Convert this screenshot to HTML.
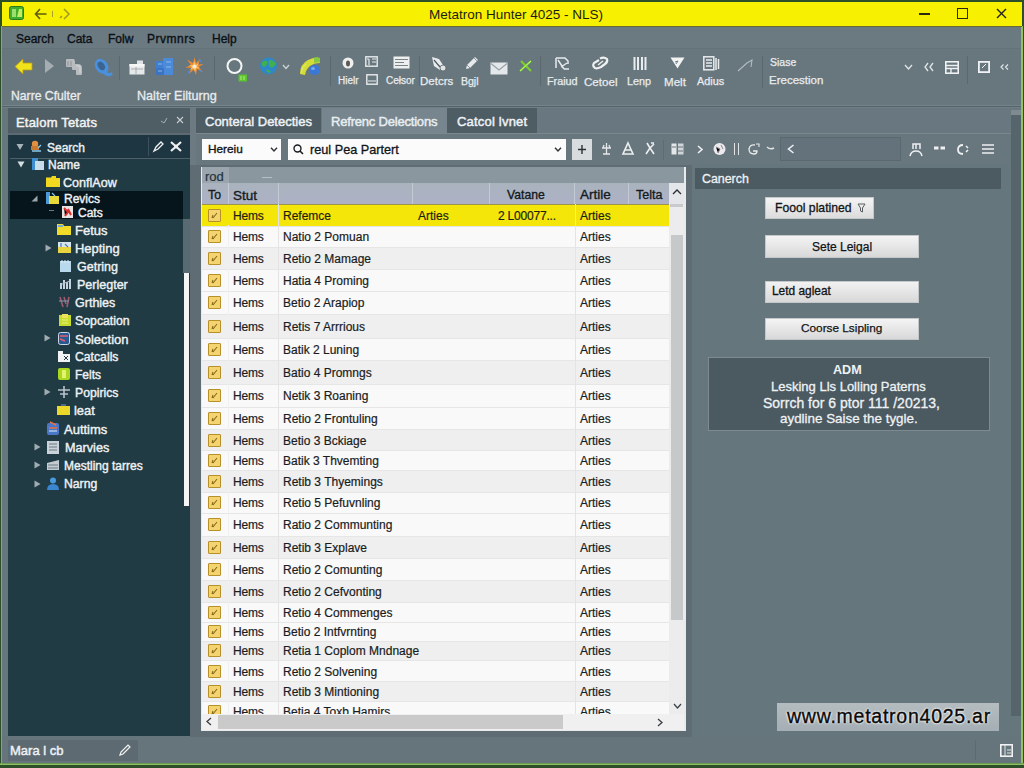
<!DOCTYPE html>
<html><head><meta charset="utf-8">
<style>
*{margin:0;padding:0;box-sizing:border-box}
html,body{width:1024px;height:768px;overflow:hidden;background:#66767d;font-family:"Liberation Sans",sans-serif;font-size:12px;color:#111}
.a{position:absolute}
.t{position:absolute;white-space:nowrap;line-height:1}
svg{position:absolute;overflow:visible}
.tb{font-size:11px;color:#e8ecee;-webkit-text-stroke:0.25px #e8ecee}
.m{-webkit-text-stroke:0.3px currentColor}
.m2{-webkit-text-stroke:0.2px currentColor}
.mn{font-size:12px;color:#0a1014;top:33px;-webkit-text-stroke:0.35px #0a1014}
.gr{font-size:12px;color:#161a1c;-webkit-text-stroke:0.2px currentColor}
.tr{font-size:12.5px;color:#eef2f4;-webkit-text-stroke:0.4px #eef2f4}
</style></head><body>
<!-- outer frame -->
<div class="a" style="left:0;top:0;width:1024px;height:768px;background:#2c4f2a"></div>
<div class="a" style="left:2px;top:2px;width:1020px;height:762px;background:#66767d"></div>
<div class="a" style="left:1021px;top:26px;width:2px;height:739px;background:#8fc45e"></div>
<div class="a" style="left:0;top:763px;width:1024px;height:1px;background:#6c9a50"></div><div class="a" style="left:0;top:764px;width:1024px;height:1px;background:#8cc060"></div>
<div class="a" style="left:1px;top:26px;width:1px;height:738px;background:#7fb058"></div>

<!-- title bar -->
<div class="a" style="left:2px;top:2px;width:1020px;height:25px;background:#f7f000"></div>
<div class="a" style="left:2px;top:26px;width:1020px;height:1px;background:#6a6a30"></div>
<svg style="left:8px;top:5px" width="18" height="17" viewBox="0 0 18 17">
 <rect x="1.5" y="1.5" width="14" height="13" rx="2" fill="#3fae2c" stroke="#2a7a20" stroke-width="1"/>
 <rect x="4" y="4" width="4" height="8" fill="#9ee070"/>
 <path d="M9 12 L11 4 L14 4 L14 12 Z" fill="#c8ec60"/>
</svg>
<svg style="left:34px;top:8px" width="14" height="12" viewBox="0 0 14 12">
 <path d="M6 1 L1.5 6 L6 11 M1.5 6 H12.5" fill="none" stroke="#5e5c10" stroke-width="1.6"/>
</svg>
<div class="a" style="left:52px;top:11px;width:1px;height:6px;background:#a8a030"></div>
<svg style="left:58px;top:8px" width="12" height="12" viewBox="0 0 12 12">
 <path d="M6 1 L11 6 L6 11 M4 8 L2 10" fill="none" stroke="#a09a20" stroke-width="1.5"/>
</svg>
<div class="t" style="left:429px;top:8px;font-size:13.5px;color:#1c1c10">Metatron Hunter 4025 - NLS)</div>
<div class="a" style="left:919px;top:13px;width:11px;height:2px;background:#2a2a10"></div>
<div class="a" style="left:957px;top:8px;width:11px;height:11px;border:1.6px solid #2a2a10"></div>
<svg style="left:996px;top:8px" width="11" height="11" viewBox="0 0 11 11">
 <path d="M1 1 L10 10 M10 1 L1 10" stroke="#222210" stroke-width="1.4"/>
</svg>

<!-- menu bar -->
<div class="a" style="left:2px;top:27px;width:1019px;height:21px;background:#6b7981"></div>
<div class="a" style="left:2px;top:48px;width:1019px;height:1px;background:#64737a"></div>
<div class="t mn" style="left:16px">Search</div>
<div class="t mn" style="left:67px">Cata</div>
<div class="t mn" style="left:108px">Folw</div>
<div class="t mn" style="left:147px;letter-spacing:0.5px">Prvmnrs</div>
<div class="t mn" style="left:212px">Help</div>

<!-- toolbar -->
<div class="a" style="left:2px;top:49px;width:1019px;height:57px;background:#68777e"></div>
<div class="a" style="left:2px;top:105px;width:1019px;height:1px;background:#74838a"></div><div class="a" style="left:2px;top:106px;width:1019px;height:1px;background:#55636b"></div><div class="a" style="left:2px;top:107px;width:1019px;height:1px;background:#6f7d85"></div>
<!-- toolbar icons -->
<svg style="left:14px;top:58px" width="19" height="17" viewBox="0 0 19 17">
 <path d="M1 8.5 L9 1 L9 5 L18 5 L18 12 L9 12 L9 16 Z" fill="#f2e21c" stroke="#b8a010" stroke-width="0.8"/>
</svg>
<svg style="left:44px;top:58px" width="11" height="16" viewBox="0 0 11 16">
 <path d="M1 1 L10 8 L1 15 Z" fill="#a4adb1"/>
</svg>
<svg style="left:65px;top:58px" width="19" height="18" viewBox="0 0 19 18">
 <path d="M1 2 Q1 1 2 1 H9 L10 3 V6 H13 Q17 6 17 10 V16 Q17 17 16 17 H12 Q11 17 11 16 V12 H8 Q7 12 7 11 V9 H2 Q1 9 1 8 Z" fill="#b8bcbf"/>
 <path d="M3 3 V8 M6 3 V8" stroke="#8e9498" stroke-width="1"/>
 <path d="M11 8 H15 V15" fill="none" stroke="#d4d8da" stroke-width="1"/>
</svg>
<svg style="left:93px;top:57px" width="19" height="20" viewBox="0 0 19 20">
 <g transform="rotate(-35 9 9)"><ellipse cx="8.5" cy="9" rx="6.2" ry="8" fill="#4a90dc"/><ellipse cx="8.5" cy="8.5" rx="3.2" ry="4.6" fill="#3c6490"/></g>
 <path d="M11 15 Q15 19 18 17" fill="none" stroke="#4a90dc" stroke-width="3.2" stroke-linecap="round"/>
</svg>
<div class="a" style="left:119px;top:56px;width:1px;height:24px;background:#5c686f"></div>
<svg style="left:129px;top:60px" width="16" height="15" viewBox="0 0 16 15">
 <rect x="0.5" y="4" width="15" height="10.5" fill="#e6e9ea"/>
 <rect x="0.5" y="4" width="15" height="2.5" fill="#f6f6f6"/>
 <path d="M2 9 H14 M7 7 V14" stroke="#9aa0a4" stroke-width="0.8"/>
 <rect x="8" y="0.5" width="6" height="3.5" fill="#dfe3e5"/>
</svg>
<svg style="left:155px;top:57px" width="19" height="19" viewBox="0 0 19 19">
 <rect x="1" y="4" width="8" height="7" fill="#3f7fd0"/>
 <rect x="8" y="1" width="10" height="17" fill="#4a8ad8"/>
 <rect x="1" y="11" width="8" height="7" fill="#3a74c2"/>
 <path d="M3 7 H7 M3 14 H7 M11 5 H16 M11 10 H16" stroke="#8cb6ea" stroke-width="1"/>
</svg>
<svg style="left:185px;top:57px" width="19" height="19" viewBox="0 0 19 19">
 <path d="M9.5 0.5 L11 6 L15.5 1.5 L13 7.5 L18.5 7 L13.5 10 L18 15 L12 12 L11 18 L9 12.5 L4 17 L6.5 11 L0.5 10.5 L6 8 L2 2.5 L8 6 Z" fill="#f08a30"/>
 <path d="M9.5 4 L10.5 8 L14 6 L12 9.5 L15 11 L11 11.5 L10 15 L8.5 11.5 L5 13 L7 10 L4 8 L8 8 Z" fill="#f8c060"/>
 <circle cx="9.5" cy="9.5" r="2" fill="#f0e8d8"/>
 <circle cx="15" cy="4" r="1.3" fill="#4a8ad8"/><circle cx="4" cy="15" r="1.3" fill="#4a8ad8"/><circle cx="16" cy="14" r="1" fill="#4a8ad8"/>
</svg>
<div class="a" style="left:214px;top:56px;width:1px;height:24px;background:#5c686f"></div>
<svg style="left:226px;top:58px" width="22" height="24" viewBox="0 0 22 24">
 <circle cx="8.5" cy="8" r="7" fill="none" stroke="#f4f6f6" stroke-width="2"/>
 <rect x="12.5" y="16.5" width="8.5" height="7" fill="#5cc430"/>
 <path d="M15 18 V22 M18 18 V22" stroke="#b8f080" stroke-width="1"/>
</svg>
<svg style="left:259px;top:57px" width="19" height="18" viewBox="0 0 19 18">
 <circle cx="9.5" cy="9" r="8.5" fill="#2e88c8"/>
 <path d="M3 5 Q7 2 9 5 Q8 9 5 10 Q2 9 3 5 Z M10 3 Q15 3 17 7 Q14 12 11 10 Q9 7 10 3 Z M7 13 Q10 12 12 15 Q9 17 7 13Z" fill="#3fb050"/>
</svg>
<svg style="left:282px;top:64px" width="8" height="6" viewBox="0 0 8 6">
 <path d="M1 1 L4 4.5 L7 1" fill="none" stroke="#d0d6d8" stroke-width="1.2"/>
</svg>
<svg style="left:299px;top:56px" width="22" height="21" viewBox="0 0 22 21">
 <path d="M1 18 Q1 8 9 4 Q15 1 21 2 L21 7 Q15 7 11 10 Q7 13 6 19 Z" fill="#d4dc38"/>
 <path d="M15 1.5 Q19 1 21 2 L21 6.5 Q18 6 15 7 Z" fill="#88c840"/>
 <path d="M2 17 Q3 11 7 8" fill="none" stroke="#e8ec70" stroke-width="1"/>
 <ellipse cx="15.5" cy="14" rx="5.5" ry="5" fill="#3a78d8"/>
 <ellipse cx="14" cy="12.5" rx="2" ry="1.5" fill="#7aa8f0"/>
</svg>
<div class="a" style="left:330px;top:56px;width:1px;height:30px;background:#5c686f"></div>
<svg style="left:342px;top:57px" width="12" height="12" viewBox="0 0 12 12">
 <circle cx="6" cy="6" r="5.5" fill="#eef0f0"/>
 <ellipse cx="6" cy="6.5" rx="2" ry="3" fill="#605850"/>
</svg>
<svg style="left:365px;top:56px" width="13" height="11" viewBox="0 0 13 11">
 <rect x="0.8" y="0.8" width="11.4" height="9.4" fill="none" stroke="#e8ecee" stroke-width="1.4"/>
 <path d="M4 3 V9 M7 3 H11 M7 6 H11 M2 3 H4" stroke="#e8ecee" stroke-width="1.2"/>
</svg>
<svg style="left:366px;top:74px" width="14" height="11" viewBox="0 0 14 11">
 <rect x="0.8" y="0.8" width="10.4" height="9.4" fill="none" stroke="#e8ecee" stroke-width="1.4"/>
 <path d="M2 7 H10" stroke="#e8ecee" stroke-width="1"/>
</svg>
<svg style="left:393px;top:56px" width="17" height="13" viewBox="0 0 17 13">
 <rect x="0.5" y="0.5" width="16" height="12" fill="#eef0f0"/>
 <path d="M2 3.5 H15 M2 6.5 H11 M2 9.5 H15" stroke="#788288" stroke-width="1.2"/>
</svg>
<div class="a" style="left:419px;top:56px;width:1px;height:30px;background:#5c686f"></div>
<svg style="left:430px;top:56px" width="17" height="16" viewBox="0 0 17 16">
 <path d="M2 1 L9 3 L13 9 L10 14 L4 10 Z" fill="#e8ecee"/>
 <path d="M4 4 L10 11" stroke="#4c565c" stroke-width="1.2"/>
 <circle cx="13" cy="12" r="3" fill="#dfe3e5" stroke="#5a646a" stroke-width="0.8"/>
</svg>
<svg style="left:464px;top:56px" width="15" height="15" viewBox="0 0 15 15">
 <path d="M2 13 L3 9 L11 1 L14 4 L6 12 Z" fill="#e6eaec"/>
 <path d="M3 9 L6 12 M10 2 L13 5" stroke="#8c969a" stroke-width="1"/>
</svg>
<svg style="left:490px;top:62px" width="18" height="13" viewBox="0 0 18 13">
 <rect x="0.5" y="0.5" width="17" height="12" fill="#e4e8ea"/>
 <path d="M1 1.5 L9 8 L17 1.5" fill="none" stroke="#98a2a6" stroke-width="1.2"/>
</svg>
<svg style="left:519px;top:59px" width="14" height="14" viewBox="0 0 14 14">
 <path d="M1 12 L12 2 M2 2 L12 12" stroke="#7ed030" stroke-width="2"/>
 <path d="M1 12 L12 2" stroke="#b8ff70" stroke-width="1"/>
</svg>
<div class="a" style="left:540px;top:56px;width:1px;height:30px;background:#5c686f"></div>
<svg style="left:555px;top:56px" width="15" height="15" viewBox="0 0 15 15">
 <path d="M1 2 H10 L13 5 V8 M1 2 V12 M3 4 L9 13 M12 7 L6 11 M9 13 L14 13" fill="none" stroke="#e6eaec" stroke-width="1.5"/>
</svg>
<svg style="left:592px;top:57px" width="17" height="13" viewBox="0 0 17 13">
 <path d="M3 11 Q0 9 2 6 L7 3 M8 1.5 Q12 -0.5 15 2 Q16 5 13 7 L9 10 Q5 12 3 11" fill="none" stroke="#eef0f2" stroke-width="2.2"/>
 <path d="M6 8 L11 4" stroke="#eef0f2" stroke-width="1.4"/>
</svg>
<svg style="left:633px;top:56px" width="14" height="15" viewBox="0 0 14 15">
 <path d="M1.5 1 V14 M5 1 V14 M9 1 V14 M12.5 1 V14" stroke="#e8ecee" stroke-width="2"/>
</svg>
<svg style="left:670px;top:57px" width="15" height="12" viewBox="0 0 15 12">
 <path d="M0.5 0.5 H14.5 L7.5 11.5 Z" fill="#f2f4f4"/>
 <path d="M5 5 L8 4 L6 7" fill="none" stroke="#707a80" stroke-width="1"/>
</svg>
<svg style="left:703px;top:56px" width="17" height="15" viewBox="0 0 17 15">
 <rect x="0.8" y="0.8" width="10" height="13" fill="none" stroke="#e8ecee" stroke-width="1.5"/>
 <path d="M3 4 H9 M3 7 H9 M3 10 H9" stroke="#e8ecee" stroke-width="1.4"/>
 <path d="M13 2 V14 M15.5 3 V13" stroke="#e8ecee" stroke-width="1.5"/>
</svg>
<svg style="left:737px;top:59px" width="16" height="13" viewBox="0 0 16 13">
 <path d="M1 12 L10 4 L15 1 L14 8" fill="none" stroke="#b4bcc0" stroke-width="1.1"/>
</svg>
<div class="a" style="left:762px;top:56px;width:1px;height:32px;background:#5c686f"></div>
<svg style="left:904px;top:64px" width="9" height="6" viewBox="0 0 9 6">
 <path d="M1 1 L4.5 5 L8 1" fill="none" stroke="#e0e6e8" stroke-width="1.3"/>
</svg>
<svg style="left:924px;top:62px" width="10" height="10" viewBox="0 0 10 10">
 <path d="M4 1 L1 5 L4 9 M9 1 L6 5 L9 9" fill="none" stroke="#e0e6e8" stroke-width="1.3"/>
</svg>
<svg style="left:945px;top:61px" width="14" height="13" viewBox="0 0 14 13">
 <rect x="0.8" y="0.8" width="12.4" height="11.4" fill="none" stroke="#eef0f2" stroke-width="1.6"/>
 <path d="M1 4.5 H13 M1 7.5 H13 M6 7.5 V12" stroke="#eef0f2" stroke-width="1.4"/>
</svg>
<div class="a" style="left:967px;top:56px;width:1px;height:28px;background:#5c686f"></div>
<svg style="left:978px;top:61px" width="12" height="12" viewBox="0 0 12 12">
 <rect x="0.9" y="0.9" width="10.2" height="10.2" fill="none" stroke="#f0f2f4" stroke-width="1.8"/>
 <path d="M4 7 L8 3" stroke="#f0f2f4" stroke-width="1"/>
</svg>
<svg style="left:1000px;top:64px" width="9" height="6" viewBox="0 0 9 6">
 <path d="M3.5 0.5 L1 3 L3.5 5.5 M8 0.5 L5.5 3 L8 5.5" fill="none" stroke="#e0e6e8" stroke-width="1.2"/>
</svg>

<!-- toolbar labels -->
<div class="t tb" style="left:338px;top:76px;font-size:10px">Hielr</div>
<div class="t tb" style="left:386px;top:76px;font-size:10px">Cełsor</div>
<div class="t tb" style="left:420px;top:76px;font-size:11.5px">Detcrs</div>
<div class="t tb" style="left:461px;top:76px;font-size:10.5px">Bgjl</div>
<div class="t tb" style="left:547px;top:76px;font-size:10.8px">Fraiud</div>
<div class="t tb" style="left:584px;top:76px;font-size:11.6px">Cetoel</div>
<div class="t tb" style="left:627px;top:76px;font-size:10.8px">Lenp</div>
<div class="t tb" style="left:664px;top:76px;font-size:11.6px">Melt</div>
<div class="t tb" style="left:697px;top:76px;font-size:10.9px">Adius</div>
<div class="t tb" style="left:770px;top:57px;font-size:10.5px">Siase</div>
<div class="t tb" style="left:769px;top:75px;font-size:11.5px">Erecestion</div>
<div class="t" style="left:11px;top:90px;font-size:12.2px;color:#e8ecee;-webkit-text-stroke:0.3px #e8ecee">Narre Cfulter</div>
<div class="t" style="left:137px;top:90px;font-size:12.6px;color:#e8ecee;-webkit-text-stroke:0.3px #e8ecee">Nalter Eilturng</div>
<!-- left panel -->
<div class="a" style="left:8px;top:108px;width:182px;height:25px;background:#4f5d65"></div>
<div class="a" style="left:8px;top:133px;width:182px;height:2px;background:#5d6a72"></div>
<div class="t" style="left:16px;top:116px;font-size:13px;color:#f2f4f4;letter-spacing:0.2px;-webkit-text-stroke:0.45px #f2f4f4">Etalom Tetats</div>
<svg style="left:160px;top:117px" width="8" height="7" viewBox="0 0 8 7"><path d="M1 4 L4 6 L7 1" fill="none" stroke="#a8b0b4" stroke-width="1"/></svg>
<svg style="left:176px;top:116px" width="8" height="8" viewBox="0 0 8 8"><path d="M1 1 L7 7 M7 1 L1 7" stroke="#c8ced0" stroke-width="1.1"/></svg>
<div class="a" style="left:8px;top:135px;width:182px;height:601px;background:#203b44"></div>
<div class="a" style="left:10px;top:135px;width:180px;height:23px;background:#1d3641"></div>
<div class="a" style="left:10px;top:158px;width:180px;height:1px;background:#4e606a"></div>
<div class="a" style="left:148px;top:137px;width:1px;height:19px;background:#3e525c"></div>
<div class="a" style="left:10px;top:191px;width:173px;height:28px;background:#06141b"></div>
<!-- scrollbar -->
<div class="a" style="left:183px;top:219px;width:7px;height:54px;background:#5a6a72"></div>
<div class="a" style="left:184px;top:273px;width:5px;height:233px;background:#f4f6f6"></div>
<div class="a" style="left:190px;top:108px;width:6px;height:629px;background:#6d7a82"></div>

<!-- tree items -->
<svg style="left:16px;top:143px" width="8" height="8" viewBox="0 0 8 8"><path d="M0.5 1 H7.5 L4 7 Z" fill="#a8b4ba"/></svg>
<svg style="left:30px;top:140px" width="12" height="13" viewBox="0 0 12 13">
 <circle cx="5" cy="4" r="3.2" fill="#e09040"/><rect x="1" y="6" width="8" height="4" fill="#c87a30"/>
 <path d="M2 11 H11 M8 8 L11 5" stroke="#8ac8e8" stroke-width="1.3"/>
</svg>
<div class="t tr" style="left:47px;top:142px;font-weight:normal;font-size:12px;color:#e8eef0">Search</div>
<svg style="left:153px;top:141px" width="11" height="11" viewBox="0 0 11 11"><path d="M1 10 L3 6 L8 1 L10 3 L5 8 Z" fill="none" stroke="#f0f2f2" stroke-width="1.3"/></svg>
<svg style="left:170px;top:141px" width="12" height="11" viewBox="0 0 12 11"><path d="M1 1 L11 10 M11 1 L1 10" stroke="#eef0f0" stroke-width="2.2"/><circle cx="6" cy="5.5" r="2" fill="#eef0f0"/></svg>

<svg style="left:17px;top:161px" width="8" height="7" viewBox="0 0 8 7"><path d="M0.5 0.5 H7.5 L4 6.5 Z" fill="#d4dde2"/></svg>
<svg style="left:32px;top:158px" width="12" height="12" viewBox="0 0 12 12"><rect x="0" y="0" width="6" height="12" fill="#3c8ed0"/><rect x="3" y="3" width="9" height="9" fill="#c8dcea"/></svg>
<div class="t tr" style="left:48px;top:159px;font-size:12.00px">Name</div>

<svg style="left:46px;top:176px" width="14" height="11" viewBox="0 0 14 11"><path d="M0 1.5 H5 L6 0 H10 V2 H14 V11 H0 Z" fill="#f2d820"/></svg>
<div class="t tr" style="left:63px;top:177px;font-size:12.57px">ConflAow</div>

<svg style="left:31px;top:195px" width="7" height="7" viewBox="0 0 7 7"><path d="M6.5 0.5 V6.5 H0.5 Z" fill="#9aa6ac"/></svg>
<svg style="left:46px;top:192px" width="13" height="12" viewBox="0 0 13 12"><rect x="0" y="0" width="4" height="12" fill="#4a9ad8"/><path d="M3 4 H13 V12 H3 Z" fill="#e8d838"/><path d="M6 1 L9 4" stroke="#88c0e8" stroke-width="1.2"/></svg>
<div class="t tr" style="left:64px;top:193px;font-size:12.00px">Revics</div>

<div class="a" style="left:49px;top:210px;width:5px;height:1px;background:#6a7a82"></div>
<svg style="left:62px;top:206px" width="11" height="12" viewBox="0 0 11 12"><rect x="0" y="0" width="11" height="12" fill="#e8e2e2"/><path d="M2 2 L6 6 L3 10 M6 3 L9 9" stroke="#d83030" stroke-width="2"/></svg>
<div class="t tr" style="left:78px;top:207px;font-size:12.00px">Cats</div>

<svg style="left:57px;top:224px" width="14" height="11" viewBox="0 0 14 11"><path d="M0 0 H6 L7 2 H14 V11 H0 Z" fill="#f0dc28"/><rect x="1" y="1" width="5" height="2" fill="#7aaad0"/></svg>
<div class="t tr" style="left:75px;top:224px;font-size:12.99px">Fetus</div>

<svg style="left:45px;top:244px" width="7" height="8" viewBox="0 0 7 8"><path d="M0.5 0.5 L6.5 4 L0.5 7.5 Z" fill="#a0acb2"/></svg>
<svg style="left:58px;top:242px" width="13" height="11" viewBox="0 0 13 11"><rect x="0" y="0" width="13" height="11" fill="#d6e4ee"/><path d="M0 5 H13 V11 H0Z" fill="#e6d440"/><path d="M3 1 V5 M7 2 L10 5" stroke="#4a7ab0" stroke-width="1.2"/></svg>
<div class="t tr" style="left:75px;top:243px;font-size:12.96px">Hepting</div>

<svg style="left:60px;top:260px" width="11" height="12" viewBox="0 0 11 12"><rect x="0" y="1" width="11" height="11" fill="#b8d8ec"/><path d="M2 0 V3 M5 0 V3 M8 0 V3" stroke="#e0eef6" stroke-width="1"/></svg>
<div class="t tr" style="left:77px;top:261px;font-size:12.50px">Getring</div>

<svg style="left:60px;top:278px" width="11" height="12" viewBox="0 0 11 12"><path d="M1 11 V5 M4 11 V2 M7 11 V4 M10 11 V1" stroke="#d8e6ee" stroke-width="1.8"/><path d="M0 7 L10 3" stroke="#b0c4d0" stroke-width="1"/></svg>
<div class="t tr" style="left:77px;top:279px;font-size:12.52px">Perlegter</div>

<svg style="left:59px;top:296px" width="11" height="12" viewBox="0 0 11 12"><path d="M1 1 L4 11 M5 1 L7 8 M10 1 L8 11" stroke="#a05a70" stroke-width="1.6"/><path d="M0 5 H10" stroke="#8898b0" stroke-width="1"/></svg>
<div class="t tr" style="left:75px;top:297px;font-size:12.53px">Grthies</div>

<svg style="left:59px;top:314px" width="12" height="12" viewBox="0 0 12 12"><rect x="0" y="1" width="12" height="11" fill="#c8dc30"/><rect x="3" y="0" width="6" height="4" fill="#f0e060"/><path d="M3 6 H9 M3 9 H9" stroke="#e8f080" stroke-width="1"/></svg>
<div class="t tr" style="left:75px;top:315px;font-size:12.30px">Sopcation</div>

<svg style="left:44px;top:334px" width="7" height="8" viewBox="0 0 7 8"><path d="M0.5 0.5 L6.5 4 L0.5 7.5 Z" fill="#a0acb2"/></svg>
<svg style="left:58px;top:332px" width="12" height="13" viewBox="0 0 12 13"><rect x="0.5" y="0.5" width="11" height="12" rx="2" fill="#2a5a90" stroke="#c8d8e8" stroke-width="1"/><path d="M2 4 H10 M2 7 L7 9" stroke="#e06070" stroke-width="1.4"/></svg>
<div class="t tr" style="left:75px;top:333px;font-size:13.00px">Solection</div>

<svg style="left:58px;top:351px" width="12" height="11" viewBox="0 0 12 11"><path d="M0 0 H5 V3 H12 V11 H0 Z" fill="#f0f2f4"/><path d="M6 5 L10 9 M10 5 L6 9" stroke="#2a3a44" stroke-width="1"/></svg>
<div class="t tr" style="left:75px;top:351px;font-size:12.23px">Catcalls</div>

<svg style="left:58px;top:368px" width="12" height="12" viewBox="0 0 12 12"><rect x="0" y="0" width="12" height="12" rx="2" fill="#a8d820"/><rect x="4" y="2" width="4" height="8" fill="#e8f070"/></svg>
<div class="t tr" style="left:75px;top:369px;font-size:12.00px">Felts</div>

<svg style="left:44px;top:388px" width="7" height="8" viewBox="0 0 7 8"><path d="M0.5 0.5 L6.5 4 L0.5 7.5 Z" fill="#a0acb2"/></svg>
<svg style="left:58px;top:386px" width="12" height="12" viewBox="0 0 12 12"><path d="M6 0 V12 M0 4 H12 M2 8 H10" stroke="#b8c4ca" stroke-width="1.6"/></svg>
<div class="t tr" style="left:75px;top:387px;font-size:12.23px">Popirics</div>

<svg style="left:57px;top:404px" width="13" height="11" viewBox="0 0 13 11"><path d="M0 2 H4 L5 0 H8 L9 2 H13 V11 H0 Z" fill="#ecd828"/><rect x="4" y="0" width="5" height="2" fill="#4a6a88"/></svg>
<div class="t tr" style="left:74px;top:405px;font-size:12.90px">leat</div>

<svg style="left:47px;top:422px" width="12" height="13" viewBox="0 0 12 13"><rect x="0" y="1" width="12" height="12" rx="2" fill="#4a78c8"/><path d="M3 0 L9 3 M2 6 H10" stroke="#e87040" stroke-width="1.5"/><path d="M2 9 H10" stroke="#c8dcf0" stroke-width="1.2"/></svg>
<div class="t tr" style="left:64px;top:423px;font-size:13.00px">Auttims</div>

<svg style="left:34px;top:443px" width="7" height="8" viewBox="0 0 7 8"><path d="M0.5 0.5 L6.5 4 L0.5 7.5 Z" fill="#a0acb2"/></svg>
<svg style="left:47px;top:441px" width="12" height="13" viewBox="0 0 12 13"><rect x="0" y="0" width="12" height="13" fill="#c8d2d8"/><path d="M2 3 H10 M2 6 H10 M2 9 H10" stroke="#6a7a84" stroke-width="1.2"/></svg>
<div class="t tr" style="left:65px;top:442px;font-size:12.65px">Marvies</div>

<svg style="left:34px;top:461px" width="7" height="8" viewBox="0 0 7 8"><path d="M0.5 0.5 L6.5 4 L0.5 7.5 Z" fill="#a0acb2"/></svg>
<svg style="left:47px;top:460px" width="12" height="10" viewBox="0 0 12 10"><path d="M0 3 L12 0 V10 H0 Z" fill="#c4ccd2"/><path d="M1 5 H11 M1 8 H11" stroke="#6a7a84" stroke-width="1"/></svg>
<div class="t tr" style="left:64px;top:460px;font-size:12.00px">Mestling tarres</div>

<svg style="left:34px;top:480px" width="7" height="8" viewBox="0 0 7 8"><path d="M0.5 0.5 L6.5 4 L0.5 7.5 Z" fill="#a0acb2"/></svg>
<svg style="left:47px;top:477px" width="12" height="13" viewBox="0 0 12 13"><circle cx="6" cy="3.5" r="3" fill="#4a9ae0"/><path d="M0 13 Q0 7 6 7 Q12 7 12 13 Z" fill="#3a86d0"/></svg>
<div class="t tr" style="left:64px;top:478px;font-size:12.19px">Narng</div>

<!-- bottom status -->
<div class="a" style="left:2px;top:737px;width:1019px;height:26px;background:#66757c"></div>
<div class="a" style="left:8px;top:740px;width:130px;height:21px;background:#5d6a72"></div>
<div class="t" style="left:10px;top:744px;font-size:13px;color:#eef2f4;-webkit-text-stroke:0.45px #eef2f4">Mara l cb</div>
<svg style="left:119px;top:744px" width="12" height="12" viewBox="0 0 12 12"><path d="M1 11 L2 8 L9 1 L11 3 L4 10 Z" fill="none" stroke="#f2f4f4" stroke-width="1.2"/></svg>
<!-- center tabs -->
<div class="a" style="left:196px;top:108px;width:825px;height:26px;background:#687780"></div>
<div class="a" style="left:196px;top:108px;width:125px;height:25px;background:#4e5c64"></div>
<div class="a" style="left:322px;top:108px;width:125px;height:25px;background:#76858e"></div>
<div class="a" style="left:447px;top:108px;width:90px;height:25px;background:#4e5c64"></div>
<div class="a" style="left:196px;top:133px;width:815px;height:1px;background:#7a878e"></div>
<div class="t" style="left:205px;top:115px;font-size:13px;color:#eef2f4;letter-spacing:0px;-webkit-text-stroke:0.45px #eef2f4">Conteral Detecties</div>
<div class="t" style="left:331px;top:115px;font-size:13px;color:#e8eef0;letter-spacing:-0.2px;-webkit-text-stroke:0.45px #e8eef0">Refrenc Delections</div>
<div class="t" style="left:457px;top:115px;font-size:13px;color:#eef2f4;letter-spacing:0.2px;-webkit-text-stroke:0.45px #eef2f4">Catcol lvnet</div>

<!-- center toolbar row -->
<div class="a" style="left:196px;top:134px;width:815px;height:31px;background:#68777e"></div>
<div class="a" style="left:202px;top:139px;width:79px;height:21px;background:#fbfbfb"></div>
<div class="t" style="left:208px;top:144px;font-size:11.8px;color:#101418;-webkit-text-stroke:0.35px #101418">Hereiu</div>
<svg style="left:270px;top:147px" width="8" height="5" viewBox="0 0 8 5"><path d="M1 0.8 L4 4 L7 0.8" fill="none" stroke="#303438" stroke-width="1.4"/></svg>
<div class="a" style="left:288px;top:139px;width:278px;height:21px;background:#fbfbfb"></div>
<svg style="left:293px;top:144px" width="11" height="11" viewBox="0 0 11 11"><circle cx="4.5" cy="4.5" r="3.5" fill="none" stroke="#1a1e22" stroke-width="1.4"/><path d="M7 7 L10 10" stroke="#1a1e22" stroke-width="1.6"/></svg>
<div class="t" style="left:310px;top:144px;font-size:12.7px;color:#101418;-webkit-text-stroke:0.3px #101418">reul Pea Partert</div>
<svg style="left:554px;top:147px" width="8" height="5" viewBox="0 0 8 5"><path d="M1 0.8 L4 4 L7 0.8" fill="none" stroke="#303438" stroke-width="1.4"/></svg>
<div class="a" style="left:572px;top:139px;width:20px;height:21px;background:#d8dcde"></div>
<svg style="left:577px;top:144px" width="10" height="11" viewBox="0 0 10 11"><path d="M5 1 V10 M1 5.5 H9" stroke="#2a3034" stroke-width="1.4"/></svg>
<svg style="left:601px;top:142px" width="11" height="13" viewBox="0 0 11 13"><path d="M5.5 1 V12 M2 12 H9 M1 6 H10 M3 3 L2 6 M8 3 L9 6" fill="none" stroke="#e4e8ea" stroke-width="1.3"/></svg>
<svg style="left:622px;top:142px" width="12" height="13" viewBox="0 0 12 13"><path d="M6 1 L11 12 H1 Z M3 8 H9" fill="none" stroke="#eceff0" stroke-width="1.6"/></svg>
<svg style="left:644px;top:142px" width="12" height="13" viewBox="0 0 12 13"><path d="M2 12 L6 6 L10 12 M6 6 L3 1 M6 6 L10 2 M7 1 H10" fill="none" stroke="#eceff0" stroke-width="1.6"/></svg>
<div class="a" style="left:663px;top:140px;width:1px;height:20px;background:#5e6b73"></div>
<svg style="left:671px;top:143px" width="13" height="12" viewBox="0 0 13 12"><rect x="0.5" y="0.5" width="5" height="11" fill="#e4e8ea"/><rect x="7" y="0.5" width="5.5" height="11" fill="#cfd5d8"/><path d="M1 4 H5 M7 4 H12 M7 8 H12" stroke="#6a767c" stroke-width="1"/></svg>
<svg style="left:697px;top:145px" width="6" height="9" viewBox="0 0 6 9"><path d="M1 1 L5 4.5 L1 8" fill="none" stroke="#eef0f2" stroke-width="1.6"/></svg>
<svg style="left:712px;top:143px" width="15" height="12" viewBox="0 0 15 12"><circle cx="7.5" cy="6" r="6" fill="#eceaee"/><path d="M4 4 L8 6 L6 10 M9 2 L11 6" stroke="#8a8490" stroke-width="1"/></svg>
<div class="a" style="left:734px;top:143px;width:1px;height:12px;background:#dfe3e5"></div>
<div class="a" style="left:738px;top:143px;width:1px;height:12px;background:#dfe3e5"></div>
<svg style="left:747px;top:143px" width="13" height="13" viewBox="0 0 13 13"><path d="M8 2 Q3 1 2 6 Q2 11 7 11 Q10 11 10 8 H6" fill="none" stroke="#e8eaec" stroke-width="1.3"/><path d="M9 1 H12 V4" fill="none" stroke="#e8eaec" stroke-width="1.1"/></svg>
<svg style="left:766px;top:146px" width="9" height="5" viewBox="0 0 9 5"><path d="M1 1 Q4 4 8 2" fill="none" stroke="#dfe3e5" stroke-width="1.4"/></svg>
<div class="a" style="left:780px;top:137px;width:121px;height:24px;background:#64737b;border:1px solid #5a6870"></div>
<svg style="left:787px;top:144px" width="8" height="10" viewBox="0 0 8 10"><path d="M6.5 1 L1.5 5 L6.5 9" fill="none" stroke="#eef0f2" stroke-width="1.6"/></svg>
<svg style="left:909px;top:142px" width="15" height="15" viewBox="0 0 15 15"><path d="M4 7 V2 H11 V7 M7 2 V7 M1 14 Q2 9 7 9 Q12 9 13 14" fill="none" stroke="#eef0f2" stroke-width="1.5"/></svg>
<svg style="left:934px;top:146px" width="12" height="4" viewBox="0 0 12 4"><rect x="0" y="0.5" width="4.5" height="3" fill="#eef0f2"/><rect x="6.5" y="0.5" width="4.5" height="3" fill="#eef0f2"/></svg>
<svg style="left:957px;top:144px" width="12" height="11" viewBox="0 0 12 11"><path d="M6 1 Q1 1 1 5.5 Q1 10 6 10" fill="none" stroke="#eef0f2" stroke-width="1.8"/><path d="M9 2 L11 4 M9 8 L11 6" stroke="#eef0f2" stroke-width="1.5"/></svg>
<svg style="left:982px;top:144px" width="13" height="10" viewBox="0 0 13 10"><path d="M0 1 H12 M0 5 H12 M0 9 H12" stroke="#eef0f2" stroke-width="1.5"/></svg>
<!-- grid -->
<div class="a" style="left:190px;top:165px;width:502px;height:572px;background:#5f6c74"></div>
<div class="a" style="left:201px;top:167px;width:485px;height:564px;background:#e8eaec"></div>
<div class="a" style="left:202px;top:167px;width:482px;height:16px;background:#8a979f"></div>
<div class="a" style="left:202px;top:167px;width:27px;height:16px;background:#9aa5ad"></div>
<div class="t" style="left:205px;top:170px;font-size:13px;color:#26323c;-webkit-text-stroke:0.2px #26323c">rod</div>
<div class="a" style="left:262px;top:177px;width:10px;height:1px;background:#b4c0c8"></div>
<div class="a" style="left:202px;top:183px;width:467px;height:21px;background:linear-gradient(#a9b3bd,#adb1c6)"></div>
<div class="a" style="left:228px;top:183px;width:1px;height:21px;background:#c4cad4"></div>
<div class="a" style="left:278px;top:183px;width:1px;height:21px;background:#c4cad4"></div>
<div class="a" style="left:412px;top:183px;width:1px;height:21px;background:#c4cad4"></div>
<div class="a" style="left:489px;top:183px;width:1px;height:21px;background:#c4cad4"></div>
<div class="a" style="left:574px;top:183px;width:1px;height:21px;background:#c4cad4"></div>
<div class="a" style="left:628px;top:183px;width:1px;height:21px;background:#c4cad4"></div>
<div class="t" style="left:208px;top:189px;font-size:12.3px;color:#141a20;-webkit-text-stroke:0.35px #141a20">To</div>
<div class="t" style="left:233px;top:188.5px;font-size:13.5px;color:#141a20;-webkit-text-stroke:0.35px #141a20">Stut</div>
<div class="t" style="left:507px;top:189px;font-size:12.2px;color:#141a20;-webkit-text-stroke:0.35px #141a20">Vatane</div>
<div class="t" style="left:580px;top:188px;font-size:13.5px;color:#141a20;-webkit-text-stroke:0.35px #141a20">Artile</div>
<div class="t" style="left:636px;top:189px;font-size:12.5px;color:#141a20;-webkit-text-stroke:0.35px #141a20">Telta</div>
<div class="a" style="left:202px;top:204px;width:467px;height:22px;background:#f5e60a"></div>
<div class="a" style="left:208px;top:208.5px;width:13px;height:13px;background:#f4d470;border:1px solid #b8902a;border-radius:1px"></div>
<svg style="left:211px;top:211.5px" width="7" height="7" viewBox="0 0 7 7"><path d="M1 6 L2 3 M2 6 L6 1" stroke="#8a6a18" stroke-width="1.1" fill="none"/></svg>
<div class="t gr" style="left:233px;top:209.5px;color:#1e1e10;letter-spacing:-0.2px">Hems</div>
<div class="t gr" style="left:283px;top:209.5px;color:#1e1e10">Refemce</div>
<div class="t gr" style="left:580px;top:209.5px;color:#1e1e10">Arties</div>
<div class="a" style="left:202px;top:226px;width:467px;height:21px;background:#f9f9f9"></div>
<div class="a" style="left:202px;top:226px;width:467px;height:1px;background:#e6e6e6"></div>
<div class="a" style="left:208px;top:229.5px;width:13px;height:13px;background:#f4d470;border:1px solid #b8902a;border-radius:1px"></div>
<svg style="left:211px;top:232.5px" width="7" height="7" viewBox="0 0 7 7"><path d="M1 6 L2 3 M2 6 L6 1" stroke="#8a6a18" stroke-width="1.1" fill="none"/></svg>
<div class="t gr" style="left:233px;top:230.5px;color:#1a1c1e;letter-spacing:-0.2px">Hems</div>
<div class="t gr" style="left:283px;top:230.5px;color:#1a1c1e">Natio 2 Pomuan</div>
<div class="t gr" style="left:580px;top:230.5px;color:#1a1c1e">Arties</div>
<div class="a" style="left:202px;top:247px;width:467px;height:22px;background:#efefef"></div>
<div class="a" style="left:202px;top:247px;width:467px;height:1px;background:#e6e6e6"></div>
<div class="a" style="left:208px;top:251.5px;width:13px;height:13px;background:#f4d470;border:1px solid #b8902a;border-radius:1px"></div>
<svg style="left:211px;top:254.5px" width="7" height="7" viewBox="0 0 7 7"><path d="M1 6 L2 3 M2 6 L6 1" stroke="#8a6a18" stroke-width="1.1" fill="none"/></svg>
<div class="t gr" style="left:233px;top:252.5px;color:#1a1c1e;letter-spacing:-0.2px">Hems</div>
<div class="t gr" style="left:283px;top:252.5px;color:#1a1c1e">Retio 2 Mamage</div>
<div class="t gr" style="left:580px;top:252.5px;color:#1a1c1e">Arties</div>
<div class="a" style="left:202px;top:269px;width:467px;height:22px;background:#f9f9f9"></div>
<div class="a" style="left:202px;top:269px;width:467px;height:1px;background:#e6e6e6"></div>
<div class="a" style="left:208px;top:273.5px;width:13px;height:13px;background:#f4d470;border:1px solid #b8902a;border-radius:1px"></div>
<svg style="left:211px;top:276.5px" width="7" height="7" viewBox="0 0 7 7"><path d="M1 6 L2 3 M2 6 L6 1" stroke="#8a6a18" stroke-width="1.1" fill="none"/></svg>
<div class="t gr" style="left:233px;top:274.5px;color:#1a1c1e;letter-spacing:-0.2px">Hems</div>
<div class="t gr" style="left:283px;top:274.5px;color:#1a1c1e">Hatia 4 Proming</div>
<div class="t gr" style="left:580px;top:274.5px;color:#1a1c1e">Arties</div>
<div class="a" style="left:202px;top:291px;width:467px;height:23px;background:#f9f9f9"></div>
<div class="a" style="left:202px;top:291px;width:467px;height:1px;background:#e6e6e6"></div>
<div class="a" style="left:208px;top:295.5px;width:13px;height:13px;background:#f4d470;border:1px solid #b8902a;border-radius:1px"></div>
<svg style="left:211px;top:298.5px" width="7" height="7" viewBox="0 0 7 7"><path d="M1 6 L2 3 M2 6 L6 1" stroke="#8a6a18" stroke-width="1.1" fill="none"/></svg>
<div class="t gr" style="left:233px;top:296.5px;color:#1a1c1e;letter-spacing:-0.2px">Hems</div>
<div class="t gr" style="left:283px;top:296.5px;color:#1a1c1e">Betio 2 Arapiop</div>
<div class="t gr" style="left:580px;top:296.5px;color:#1a1c1e">Arties</div>
<div class="a" style="left:202px;top:314px;width:467px;height:24px;background:#efefef"></div>
<div class="a" style="left:202px;top:314px;width:467px;height:1px;background:#e6e6e6"></div>
<div class="a" style="left:208px;top:319.5px;width:13px;height:13px;background:#f4d470;border:1px solid #b8902a;border-radius:1px"></div>
<svg style="left:211px;top:322.5px" width="7" height="7" viewBox="0 0 7 7"><path d="M1 6 L2 3 M2 6 L6 1" stroke="#8a6a18" stroke-width="1.1" fill="none"/></svg>
<div class="t gr" style="left:233px;top:320.5px;color:#1a1c1e;letter-spacing:-0.2px">Hems</div>
<div class="t gr" style="left:283px;top:320.5px;color:#1a1c1e">Retis 7 Arrrious</div>
<div class="t gr" style="left:580px;top:320.5px;color:#1a1c1e">Arties</div>
<div class="a" style="left:202px;top:338px;width:467px;height:22px;background:#f9f9f9"></div>
<div class="a" style="left:202px;top:338px;width:467px;height:1px;background:#e6e6e6"></div>
<div class="a" style="left:208px;top:342.5px;width:13px;height:13px;background:#f4d470;border:1px solid #b8902a;border-radius:1px"></div>
<svg style="left:211px;top:345.5px" width="7" height="7" viewBox="0 0 7 7"><path d="M1 6 L2 3 M2 6 L6 1" stroke="#8a6a18" stroke-width="1.1" fill="none"/></svg>
<div class="t gr" style="left:233px;top:343.5px;color:#1a1c1e;letter-spacing:-0.2px">Hems</div>
<div class="t gr" style="left:283px;top:343.5px;color:#1a1c1e">Batik 2 Luning</div>
<div class="t gr" style="left:580px;top:343.5px;color:#1a1c1e">Arties</div>
<div class="a" style="left:202px;top:360px;width:467px;height:24px;background:#efefef"></div>
<div class="a" style="left:202px;top:360px;width:467px;height:1px;background:#e6e6e6"></div>
<div class="a" style="left:208px;top:365.5px;width:13px;height:13px;background:#f4d470;border:1px solid #b8902a;border-radius:1px"></div>
<svg style="left:211px;top:368.5px" width="7" height="7" viewBox="0 0 7 7"><path d="M1 6 L2 3 M2 6 L6 1" stroke="#8a6a18" stroke-width="1.1" fill="none"/></svg>
<div class="t gr" style="left:233px;top:366.5px;color:#1a1c1e;letter-spacing:-0.2px">Hems</div>
<div class="t gr" style="left:283px;top:366.5px;color:#1a1c1e">Batio 4 Promngs</div>
<div class="t gr" style="left:580px;top:366.5px;color:#1a1c1e">Arties</div>
<div class="a" style="left:202px;top:384px;width:467px;height:23px;background:#f9f9f9"></div>
<div class="a" style="left:202px;top:384px;width:467px;height:1px;background:#e6e6e6"></div>
<div class="a" style="left:208px;top:389.0px;width:13px;height:13px;background:#f4d470;border:1px solid #b8902a;border-radius:1px"></div>
<svg style="left:211px;top:392.0px" width="7" height="7" viewBox="0 0 7 7"><path d="M1 6 L2 3 M2 6 L6 1" stroke="#8a6a18" stroke-width="1.1" fill="none"/></svg>
<div class="t gr" style="left:233px;top:390.0px;color:#1a1c1e;letter-spacing:-0.2px">Hems</div>
<div class="t gr" style="left:283px;top:390.0px;color:#1a1c1e">Netik 3 Roaning</div>
<div class="t gr" style="left:580px;top:390.0px;color:#1a1c1e">Arties</div>
<div class="a" style="left:202px;top:407px;width:467px;height:22px;background:#f9f9f9"></div>
<div class="a" style="left:202px;top:407px;width:467px;height:1px;background:#e6e6e6"></div>
<div class="a" style="left:208px;top:412.0px;width:13px;height:13px;background:#f4d470;border:1px solid #b8902a;border-radius:1px"></div>
<svg style="left:211px;top:415.0px" width="7" height="7" viewBox="0 0 7 7"><path d="M1 6 L2 3 M2 6 L6 1" stroke="#8a6a18" stroke-width="1.1" fill="none"/></svg>
<div class="t gr" style="left:233px;top:413.0px;color:#1a1c1e;letter-spacing:-0.2px">Hems</div>
<div class="t gr" style="left:283px;top:413.0px;color:#1a1c1e">Retio 2 Frontuling</div>
<div class="t gr" style="left:580px;top:413.0px;color:#1a1c1e">Arties</div>
<div class="a" style="left:202px;top:429px;width:467px;height:21px;background:#efefef"></div>
<div class="a" style="left:202px;top:429px;width:467px;height:1px;background:#e6e6e6"></div>
<div class="a" style="left:208px;top:433.5px;width:13px;height:13px;background:#f4d470;border:1px solid #b8902a;border-radius:1px"></div>
<svg style="left:211px;top:436.5px" width="7" height="7" viewBox="0 0 7 7"><path d="M1 6 L2 3 M2 6 L6 1" stroke="#8a6a18" stroke-width="1.1" fill="none"/></svg>
<div class="t gr" style="left:233px;top:434.5px;color:#1a1c1e;letter-spacing:-0.2px">Hems</div>
<div class="t gr" style="left:283px;top:434.5px;color:#1a1c1e">Betio 3 Bckiage</div>
<div class="t gr" style="left:580px;top:434.5px;color:#1a1c1e">Arties</div>
<div class="a" style="left:202px;top:450px;width:467px;height:20px;background:#f9f9f9"></div>
<div class="a" style="left:202px;top:450px;width:467px;height:1px;background:#e6e6e6"></div>
<div class="a" style="left:208px;top:453.5px;width:13px;height:13px;background:#f4d470;border:1px solid #b8902a;border-radius:1px"></div>
<svg style="left:211px;top:456.5px" width="7" height="7" viewBox="0 0 7 7"><path d="M1 6 L2 3 M2 6 L6 1" stroke="#8a6a18" stroke-width="1.1" fill="none"/></svg>
<div class="t gr" style="left:233px;top:454.5px;color:#1a1c1e;letter-spacing:-0.2px">Hems</div>
<div class="t gr" style="left:283px;top:454.5px;color:#1a1c1e">Batik 3 Thvemting</div>
<div class="t gr" style="left:580px;top:454.5px;color:#1a1c1e">Arties</div>
<div class="a" style="left:202px;top:470px;width:467px;height:22px;background:#efefef"></div>
<div class="a" style="left:202px;top:470px;width:467px;height:1px;background:#e6e6e6"></div>
<div class="a" style="left:208px;top:474.5px;width:13px;height:13px;background:#f4d470;border:1px solid #b8902a;border-radius:1px"></div>
<svg style="left:211px;top:477.5px" width="7" height="7" viewBox="0 0 7 7"><path d="M1 6 L2 3 M2 6 L6 1" stroke="#8a6a18" stroke-width="1.1" fill="none"/></svg>
<div class="t gr" style="left:233px;top:475.5px;color:#1a1c1e;letter-spacing:-0.2px">Hems</div>
<div class="t gr" style="left:283px;top:475.5px;color:#1a1c1e">Retib 3 Thyemings</div>
<div class="t gr" style="left:580px;top:475.5px;color:#1a1c1e">Arties</div>
<div class="a" style="left:202px;top:492px;width:467px;height:21px;background:#f9f9f9"></div>
<div class="a" style="left:202px;top:492px;width:467px;height:1px;background:#e6e6e6"></div>
<div class="a" style="left:208px;top:495.5px;width:13px;height:13px;background:#f4d470;border:1px solid #b8902a;border-radius:1px"></div>
<svg style="left:211px;top:498.5px" width="7" height="7" viewBox="0 0 7 7"><path d="M1 6 L2 3 M2 6 L6 1" stroke="#8a6a18" stroke-width="1.1" fill="none"/></svg>
<div class="t gr" style="left:233px;top:496.5px;color:#1a1c1e;letter-spacing:-0.2px">Hems</div>
<div class="t gr" style="left:283px;top:496.5px;color:#1a1c1e">Retio 5 Pefuvnling</div>
<div class="t gr" style="left:580px;top:496.5px;color:#1a1c1e">Arties</div>
<div class="a" style="left:202px;top:513px;width:467px;height:23px;background:#f9f9f9"></div>
<div class="a" style="left:202px;top:513px;width:467px;height:1px;background:#e6e6e6"></div>
<div class="a" style="left:208px;top:517.5px;width:13px;height:13px;background:#f4d470;border:1px solid #b8902a;border-radius:1px"></div>
<svg style="left:211px;top:520.5px" width="7" height="7" viewBox="0 0 7 7"><path d="M1 6 L2 3 M2 6 L6 1" stroke="#8a6a18" stroke-width="1.1" fill="none"/></svg>
<div class="t gr" style="left:233px;top:518.5px;color:#1a1c1e;letter-spacing:-0.2px">Hems</div>
<div class="t gr" style="left:283px;top:518.5px;color:#1a1c1e">Ratio 2 Communting</div>
<div class="t gr" style="left:580px;top:518.5px;color:#1a1c1e">Arties</div>
<div class="a" style="left:202px;top:536px;width:467px;height:22px;background:#efefef"></div>
<div class="a" style="left:202px;top:536px;width:467px;height:1px;background:#e6e6e6"></div>
<div class="a" style="left:208px;top:540.5px;width:13px;height:13px;background:#f4d470;border:1px solid #b8902a;border-radius:1px"></div>
<svg style="left:211px;top:543.5px" width="7" height="7" viewBox="0 0 7 7"><path d="M1 6 L2 3 M2 6 L6 1" stroke="#8a6a18" stroke-width="1.1" fill="none"/></svg>
<div class="t gr" style="left:233px;top:541.5px;color:#1a1c1e;letter-spacing:-0.2px">Hems</div>
<div class="t gr" style="left:283px;top:541.5px;color:#1a1c1e">Retib 3 Explave</div>
<div class="t gr" style="left:580px;top:541.5px;color:#1a1c1e">Arties</div>
<div class="a" style="left:202px;top:558px;width:467px;height:22px;background:#f9f9f9"></div>
<div class="a" style="left:202px;top:558px;width:467px;height:1px;background:#e6e6e6"></div>
<div class="a" style="left:208px;top:562.5px;width:13px;height:13px;background:#f4d470;border:1px solid #b8902a;border-radius:1px"></div>
<svg style="left:211px;top:565.5px" width="7" height="7" viewBox="0 0 7 7"><path d="M1 6 L2 3 M2 6 L6 1" stroke="#8a6a18" stroke-width="1.1" fill="none"/></svg>
<div class="t gr" style="left:233px;top:563.5px;color:#1a1c1e;letter-spacing:-0.2px">Hems</div>
<div class="t gr" style="left:283px;top:563.5px;color:#1a1c1e">Retio 2 Comunting</div>
<div class="t gr" style="left:580px;top:563.5px;color:#1a1c1e">Arties</div>
<div class="a" style="left:202px;top:580px;width:467px;height:22px;background:#efefef"></div>
<div class="a" style="left:202px;top:580px;width:467px;height:1px;background:#e6e6e6"></div>
<div class="a" style="left:208px;top:584.5px;width:13px;height:13px;background:#f4d470;border:1px solid #b8902a;border-radius:1px"></div>
<svg style="left:211px;top:587.5px" width="7" height="7" viewBox="0 0 7 7"><path d="M1 6 L2 3 M2 6 L6 1" stroke="#8a6a18" stroke-width="1.1" fill="none"/></svg>
<div class="t gr" style="left:233px;top:585.5px;color:#1a1c1e;letter-spacing:-0.2px">Hems</div>
<div class="t gr" style="left:283px;top:585.5px;color:#1a1c1e">Retio 2 Cefvonting</div>
<div class="t gr" style="left:580px;top:585.5px;color:#1a1c1e">Arties</div>
<div class="a" style="left:202px;top:602px;width:467px;height:20px;background:#f9f9f9"></div>
<div class="a" style="left:202px;top:602px;width:467px;height:1px;background:#e6e6e6"></div>
<div class="a" style="left:208px;top:606.0px;width:13px;height:13px;background:#f4d470;border:1px solid #b8902a;border-radius:1px"></div>
<svg style="left:211px;top:609.0px" width="7" height="7" viewBox="0 0 7 7"><path d="M1 6 L2 3 M2 6 L6 1" stroke="#8a6a18" stroke-width="1.1" fill="none"/></svg>
<div class="t gr" style="left:233px;top:607.0px;color:#1a1c1e;letter-spacing:-0.2px">Hems</div>
<div class="t gr" style="left:283px;top:607.0px;color:#1a1c1e">Retio 4 Commenges</div>
<div class="t gr" style="left:580px;top:607.0px;color:#1a1c1e">Arties</div>
<div class="a" style="left:202px;top:622px;width:467px;height:19px;background:#f9f9f9"></div>
<div class="a" style="left:202px;top:622px;width:467px;height:1px;background:#e6e6e6"></div>
<div class="a" style="left:208px;top:625.0px;width:13px;height:13px;background:#f4d470;border:1px solid #b8902a;border-radius:1px"></div>
<svg style="left:211px;top:628.0px" width="7" height="7" viewBox="0 0 7 7"><path d="M1 6 L2 3 M2 6 L6 1" stroke="#8a6a18" stroke-width="1.1" fill="none"/></svg>
<div class="t gr" style="left:233px;top:626.0px;color:#1a1c1e;letter-spacing:-0.2px">Hems</div>
<div class="t gr" style="left:283px;top:626.0px;color:#1a1c1e">Betio 2 Intfvrnting</div>
<div class="t gr" style="left:580px;top:626.0px;color:#1a1c1e">Arties</div>
<div class="a" style="left:202px;top:641px;width:467px;height:19px;background:#efefef"></div>
<div class="a" style="left:202px;top:641px;width:467px;height:1px;background:#e6e6e6"></div>
<div class="a" style="left:208px;top:643.5px;width:13px;height:13px;background:#f4d470;border:1px solid #b8902a;border-radius:1px"></div>
<svg style="left:211px;top:646.5px" width="7" height="7" viewBox="0 0 7 7"><path d="M1 6 L2 3 M2 6 L6 1" stroke="#8a6a18" stroke-width="1.1" fill="none"/></svg>
<div class="t gr" style="left:233px;top:644.5px;color:#1a1c1e;letter-spacing:-0.2px">Hems</div>
<div class="t gr" style="left:283px;top:644.5px;color:#1a1c1e">Retia 1 Coplom Mndnage</div>
<div class="t gr" style="left:580px;top:644.5px;color:#1a1c1e">Arties</div>
<div class="a" style="left:202px;top:660px;width:467px;height:21px;background:#f9f9f9"></div>
<div class="a" style="left:202px;top:660px;width:467px;height:1px;background:#e6e6e6"></div>
<div class="a" style="left:208px;top:664.5px;width:13px;height:13px;background:#f4d470;border:1px solid #b8902a;border-radius:1px"></div>
<svg style="left:211px;top:667.5px" width="7" height="7" viewBox="0 0 7 7"><path d="M1 6 L2 3 M2 6 L6 1" stroke="#8a6a18" stroke-width="1.1" fill="none"/></svg>
<div class="t gr" style="left:233px;top:665.5px;color:#1a1c1e;letter-spacing:-0.2px">Hems</div>
<div class="t gr" style="left:283px;top:665.5px;color:#1a1c1e">Retio 2 Solvening</div>
<div class="t gr" style="left:580px;top:665.5px;color:#1a1c1e">Arties</div>
<div class="a" style="left:202px;top:681px;width:467px;height:20px;background:#efefef"></div>
<div class="a" style="left:202px;top:681px;width:467px;height:1px;background:#e6e6e6"></div>
<div class="a" style="left:208px;top:685.0px;width:13px;height:13px;background:#f4d470;border:1px solid #b8902a;border-radius:1px"></div>
<svg style="left:211px;top:688.0px" width="7" height="7" viewBox="0 0 7 7"><path d="M1 6 L2 3 M2 6 L6 1" stroke="#8a6a18" stroke-width="1.1" fill="none"/></svg>
<div class="t gr" style="left:233px;top:686.0px;color:#1a1c1e;letter-spacing:-0.2px">Hems</div>
<div class="t gr" style="left:283px;top:686.0px;color:#1a1c1e">Retib 3 Mintioning</div>
<div class="t gr" style="left:580px;top:686.0px;color:#1a1c1e">Arties</div>
<div class="a" style="left:202px;top:701px;width:467px;height:13px;background:#f9f9f9"></div>
<div class="a" style="left:202px;top:701px;width:467px;height:1px;background:#e6e6e6"></div>
<div class="a" style="left:208px;top:704.5px;width:13px;height:13px;background:#f4d470;border:1px solid #b8902a;border-radius:1px"></div>
<svg style="left:211px;top:707.5px" width="7" height="7" viewBox="0 0 7 7"><path d="M1 6 L2 3 M2 6 L6 1" stroke="#8a6a18" stroke-width="1.1" fill="none"/></svg>
<div class="t gr" style="left:233px;top:705.5px;color:#1a1c1e;letter-spacing:-0.2px">Hems</div>
<div class="t gr" style="left:283px;top:705.5px;color:#1a1c1e">Betia 4 Toxb Hamirs</div>
<div class="t gr" style="left:580px;top:705.5px;color:#1a1c1e">Arties</div>
<div class="a" style="left:202px;top:204px;width:467px;height:1px;background:#9a9450"></div>
<div class="a" style="left:278px;top:204px;width:1px;height:510px;background:#e4e4e4"></div>
<div class="a" style="left:575px;top:204px;width:1px;height:510px;background:#e4e4e4"></div>
<div class="a" style="left:228px;top:225px;width:1px;height:489px;background:#f0f0f0"></div>
<div class="t gr" style="left:418px;top:209.5px;color:#1e1e10">Arties</div>
<div class="t gr" style="left:498px;top:209.5px;color:#1e1e10;letter-spacing:-0.2px">2 L00077...</div>
<div class="a" style="left:669px;top:183px;width:15px;height:531px;background:#ececec"></div>
<div class="a" style="left:669px;top:183px;width:15px;height:21px;background:#e4e6ea"></div>
<svg style="left:672px;top:189px" width="10" height="6" viewBox="0 0 10 6"><path d="M1 5 L5 1 L9 5" fill="none" stroke="#2a2e32" stroke-width="1.3"/></svg>
<div class="a" style="left:670px;top:204px;width:13px;height:3px;background:#c8cacc"></div>
<div class="a" style="left:671px;top:235px;width:12px;height:385px;background:#c6c8ca"></div>
<svg style="left:673px;top:703px" width="9" height="6" viewBox="0 0 9 6"><path d="M1 1 L4.5 5 L8 1" fill="none" stroke="#3a3e42" stroke-width="1.2"/></svg>
<div class="a" style="left:202px;top:714px;width:482px;height:16px;background:#f0f0f0"></div>
<div class="a" style="left:218px;top:715px;width:345px;height:14px;background:#cacaca"></div>
<svg style="left:206px;top:717px" width="6" height="9" viewBox="0 0 6 9"><path d="M5 1 L1 4.5 L5 8" fill="none" stroke="#3a3e42" stroke-width="1.3"/></svg>
<svg style="left:657px;top:718px" width="6" height="9" viewBox="0 0 6 9"><path d="M1 1 L5 4.5 L1 8" fill="none" stroke="#3a3e42" stroke-width="1.3"/></svg>
<!-- right panel -->
<div class="a" style="left:1011px;top:110px;width:10px;height:606px;background:#56646c"></div>
<div class="a" style="left:1011px;top:110px;width:10px;height:5px;background:#7e8a90"></div>
<div class="a" style="left:695px;top:168px;width:306px;height:21px;background:#4c5a62"></div>
<div class="t" style="left:702px;top:173px;font-size:12.4px;color:#eef2f4;-webkit-text-stroke:0.3px #eef2f4">Canerch</div>

<div class="a" style="left:765px;top:197px;width:109px;height:22px;background:linear-gradient(#f4f4f4,#dcdcdc);border:1px solid #c4c8ca"></div>
<div class="t" style="left:775px;top:202px;font-size:12.2px;color:#121416;-webkit-text-stroke:0.3px #121416">Foool platined</div>
<svg style="left:857px;top:203px" width="9" height="10" viewBox="0 0 9 10"><path d="M1 1 H8 L5.5 5 V9 L3.5 8 V5 Z" fill="none" stroke="#5a5e60" stroke-width="1"/></svg>

<div class="a" style="left:765px;top:235px;width:154px;height:23px;background:linear-gradient(#f4f4f4,#d8d8d8);border:1px solid #c4c8ca"></div>
<div class="t" style="left:812px;top:240.5px;font-size:12px;color:#121416;-webkit-text-stroke:0.25px #121416">Sete Leigal</div>

<div class="a" style="left:765px;top:281px;width:154px;height:22px;background:linear-gradient(#f2f2f2,#d8d8d8);border:1px solid #c4c8ca"></div>
<div class="t" style="left:772px;top:286px;font-size:11.9px;color:#121416;-webkit-text-stroke:0.3px #121416">Letd agleat</div>

<div class="a" style="left:765px;top:318px;width:154px;height:22px;background:linear-gradient(#f4f4f4,#d8d8d8);border:1px solid #c4c8ca"></div>
<div class="t" style="left:801px;top:322.5px;font-size:11.8px;color:#121416;-webkit-text-stroke:0.25px #121416">Coorse Lsipling</div>

<div class="a" style="left:708px;top:357px;width:282px;height:74px;background:#4b5961;border:1px solid #7e8a90"></div>
<div class="t" style="left:833px;top:364px;font-size:12.6px;color:#eef2f4;font-weight:bold">ADM</div>
<div class="t m" style="left:771px;top:380px;font-size:13px;color:#eef2f4">Lesking Lls Lolling Paterns</div>
<div class="t m" style="left:763px;top:396px;font-size:14px;color:#eef2f4">Sorrch for 6 ptor 111 /20213,</div>
<div class="t m" style="left:780px;top:412px;font-size:13.4px;color:#eef2f4">aydline Saise the tygle.</div>

<!-- watermark -->
<div class="a" style="left:777px;top:703px;width:222px;height:28px;background:linear-gradient(#b4bcc0,#a4aeb4)"></div>
<div class="t" style="left:787px;top:707px;font-size:19.5px;color:#0a0a0a;letter-spacing:0.75px;-webkit-text-stroke:0.4px #0a0a0a;text-shadow:0 0 1px #fff,0 0 2px #fff,0 0 2px #fff,0 0 3px #fff">www.metatron4025.ar</div>

<!-- bottom right -->
<div class="a" style="left:975px;top:740px;width:1px;height:20px;background:#5e6a72"></div>
<svg style="left:1000px;top:744px" width="13" height="13" viewBox="0 0 13 13"><rect x="0.8" y="0.8" width="11.4" height="11.4" fill="none" stroke="#f0f2f4" stroke-width="1.6"/><path d="M5 1 V12 M7 6 H11 M7 9 H11" stroke="#e0e4e6" stroke-width="1"/></svg>
</body></html>
